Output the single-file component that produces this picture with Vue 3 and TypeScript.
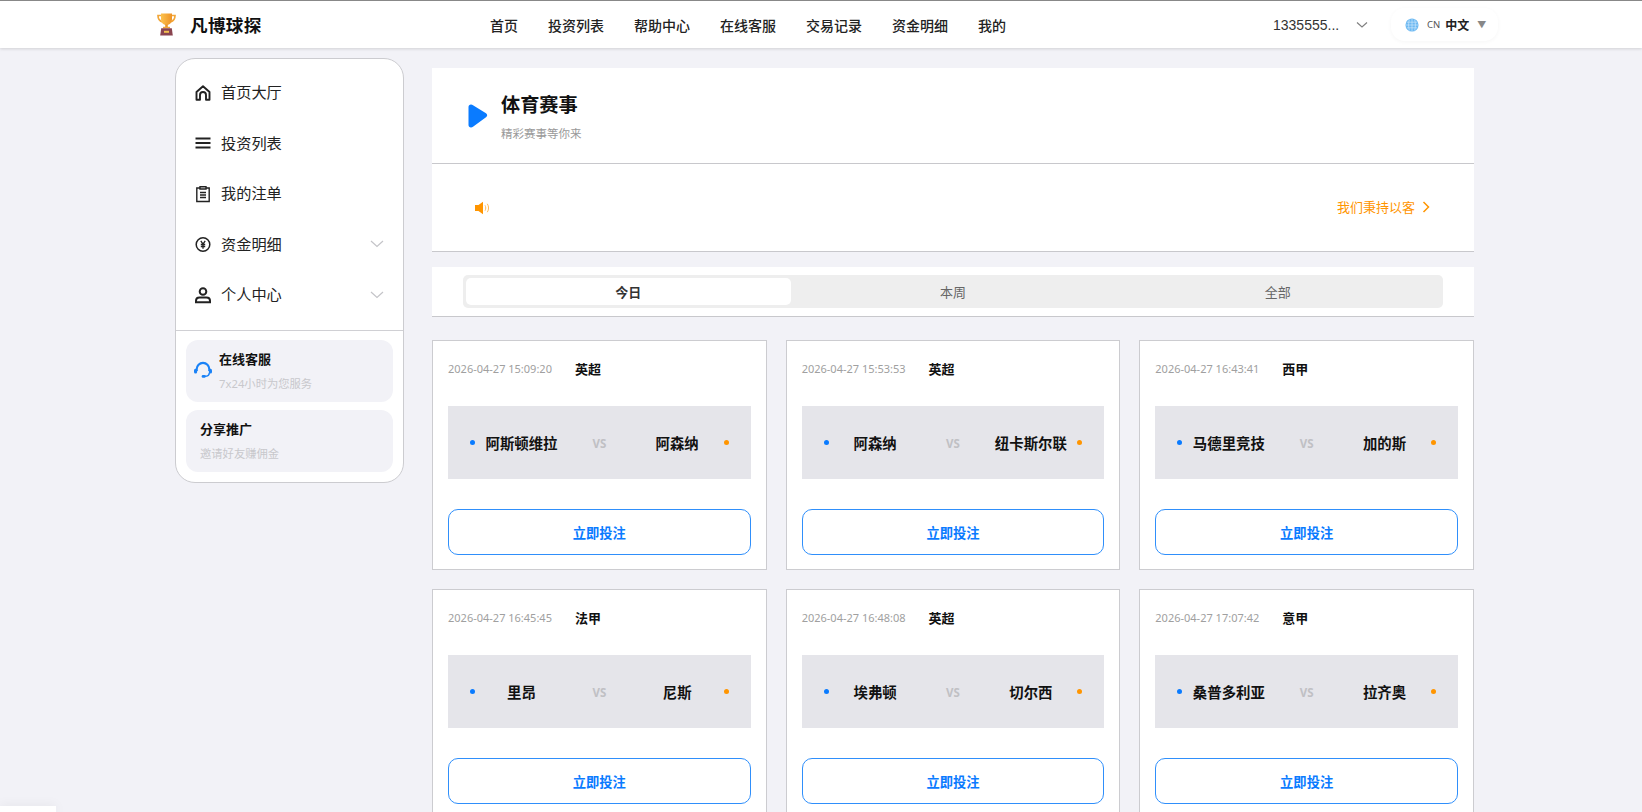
<template>
  <div class="page">
    <header class="topbar">
      <div class="topbar-inner">
        <div class="logo">
          <svg class="trophy" viewBox="0 0 19 23" width="19" height="23">
            <defs>
              <linearGradient id="cup" x1="0" y1="0" x2="1" y2="0">
                <stop offset="0" stop-color="#fcc24e" />
                <stop offset="1" stop-color="#ee9226" />
              </linearGradient>
            </defs>
            <path d="M4.5 2.5H1c0 3.5 1.5 5.5 4.500 6.5M14.5 2.5H18c0 3.5-1.5 5.5-4.5 6.5" fill="none" stroke="#f2a73a" stroke-width="1.7" />
            <path d="M4 .5h11v5c0 4-2 6.5-5.5 6.5S4 9.500 4 5.500z" fill="url(#cup)" />
            <path d="M8.2 11.5h2.600V14H8.200z" fill="#e8962b" />
            <path d="M6 13.8h7v1.500H6z" fill="#f0a63a" />
            <path d="M4.2 15.3h10.6l1 7.200H3.200z" fill="#8a4450" />
            <path d="M7 17.8h5v2H7z" fill="#f3c04f" />
          </svg>
          <span class="logo-text">凡博球探</span>
        </div>
        <nav class="nav">
          <a v-for="item in navItems" :key="item" class="nav-item">{{ item }}</a>
        </nav>
        <div class="user">
          <span class="user-name">1335555...</span>
          <svg class="user-arrow" viewBox="0 0 12 8" width="12" height="8">
            <path d="M1 1.5l5 4.500 5-4.500" fill="none" stroke="#808080" stroke-width="1.2" />
          </svg>
        </div>
        <div class="lang">
          <svg viewBox="0 0 16 16" width="14" height="14">
            <circle cx="8" cy="8" r="7.5" fill="#6db9f2" />
            <path d="M1 8h14M2 4.800h12M2 11.200h12M8 1v14M5 1.800C3.800 5.500 3.800 10.500 5 14.200M11 1.800c1.200 3.700 1.200 8.700 0 12.400" fill="none" stroke="#d4ecfc" stroke-width=".7" />
          </svg>
          <span class="lang-code">CN</span>
          <span class="lang-name">中文</span>
          <span class="lang-caret">▼</span>
        </div>
      </div>
    </header>

    <div class="layout">
      <aside class="sidebar">
        <ul class="menu">
          <li v-for="m in menuItems" :key="m.label" class="menu-item">
            <svg class="menu-icon" viewBox="0 0 18 18" width="18" height="18" v-html="m.icon"></svg>
            <span class="menu-label">{{ m.label }}</span>
            <svg v-if="m.arrow" class="menu-arrow" viewBox="0 0 14 8" width="14" height="8">
              <path d="M1 1l6 5.500L13 1" fill="none" stroke="#c4c4c8" stroke-width="1.2" />
            </svg>
          </li>
        </ul>
        <div class="side-cards">
          <div class="side-card service">
            <svg class="service-icon" viewBox="0 0 20 20" width="18" height="18">
              <path d="M3 11V9a7 7 0 0 1 14 0v2" fill="none" stroke="#1a82f7" stroke-width="2.4" />
              <rect x="0" y="8.5" width="3.5" height="5.5" rx="1.7" fill="#1a82f7" />
              <rect x="16.5" y="8.5" width="3.5" height="5.5" rx="1.7" fill="#1a82f7" />
              <path d="M17 13c0 2.500-2 4-5 4" fill="none" stroke="#1a82f7" stroke-width="1.6" />
              <rect x="8.5" y="15.5" width="4.5" height="3.2" rx="1.5" fill="#1a82f7" />
            </svg>
            <div>
              <div class="side-title">在线客服</div>
              <div class="side-sub">7x24小时为您服务</div>
            </div>
          </div>
          <div class="side-card share">
            <div>
              <div class="side-title">分享推广</div>
              <div class="side-sub">邀请好友赚佣金</div>
            </div>
          </div>
        </div>
      </aside>

      <main class="main">
        <section class="hero">
          <svg class="hero-icon" viewBox="0 0 20 26" width="20" height="26">
            <path d="M3 1.500c-1.500 0-2.500 1-2.500 2.500v18c0 1.500 1 2.500 2.500 2.500 .8 0 1.400-.3 2-.8l13-9.500c1.600-1.200 1.600-2.800 0-4L5 2.300C4.400 1.800 3.800 1.500 3 1.500z" fill="#0a7bff" />
          </svg>
          <div class="hero-text">
            <h1 class="hero-title">体育赛事</h1>
            <p class="hero-sub">精彩赛事等你来</p>
          </div>
        </section>

        <section class="notice">
          <svg class="notice-icon" viewBox="0 0 16 14" width="16" height="14">
            <path d="M0 4h3.500L8 .8v12.400L3.500 10H0z" fill="#ff9500" />
            <path d="M10 4.300c1 1.600 1 3.800 0 5.400M12.300 2.800c1.700 2.500 1.700 5.900 0 8.400" fill="none" stroke="#ffb347" stroke-width=".9" />
          </svg>
          <div class="notice-more">
            <span>我们秉持以客</span>
            <svg viewBox="0 0 8 12" width="8" height="12">
              <path d="M1.500 1l5 5-5 5" fill="none" stroke="#ff9500" stroke-width="1.5" />
            </svg>
          </div>
        </section>

        <section class="tabs-wrap">
          <div class="tabs">
            <button v-for="(t, i) in tabs" :key="t" class="tab" :class="{ active: i === activeTab }" @click="activeTab = i">{{ t }}</button>
          </div>
        </section>

        <section class="grid">
          <article v-for="g in games" :key="g.time" class="card">
            <div class="card-head">
              <span class="card-time">{{ g.time }}</span>
              <span class="card-league">{{ g.league }}</span>
            </div>
            <div class="match">
              <i class="dot home"></i>
              <span class="team">{{ g.home }}</span>
              <span class="vs">VS</span>
              <span class="team">{{ g.away }}</span>
              <i class="dot away"></i>
            </div>
            <button class="bet">立即投注</button>
          </article>
        </section>
      </main>
    </div>

    <div class="corner"></div>
  </div>
</template>

<script setup lang="ts">
import { ref } from 'vue';

const navItems = ['首页', '投资列表', '帮助中心', '在线客服', '交易记录', '资金明细', '我的'];
const tabs = ['今日', '本周', '全部'];
const activeTab = ref(0);

const menuItems = [
  {
    label: '首页大厅',
    arrow: false,
    icon: '<path d="M2.500 8L9 2.200 15.500 8v7.800h-3.500V11a3 3 0 0 0-6 0v4.800H2.500z" fill="none" stroke="#222" stroke-width="1.9" stroke-linejoin="round"/>'
  },
  {
    label: '投资列表',
    arrow: false,
    icon: '<path d="M1.500 4.500h15M1.500 9h15M1.500 13.500h15" fill="none" stroke="#222" stroke-width="1.9"/>'
  },
  {
    label: '我的注单',
    arrow: false,
    icon: '<path d="M6 3H2.800v13.500h12.400V3H12M6 1.800h6v2.200H6zM6 7.500h6M6 10h6M6 12.500h6" fill="none" stroke="#222" stroke-width="1.4"/>'
  },
  {
    label: '资金明细',
    arrow: true,
    icon: '<circle cx="9" cy="9.500" r="6.800" fill="none" stroke="#222" stroke-width="1.5"/><path d="M6.800 5.800L9 9l2.200-3.200M9 9v4.800M6.800 9.500h4.400M6.800 11.500h4.400" fill="none" stroke="#222" stroke-width="1.3"/>'
  },
  {
    label: '个人中心',
    arrow: true,
    icon: '<circle cx="9" cy="5.500" r="3.300" fill="none" stroke="#222" stroke-width="2"/><path d="M2 16.200v-1.400c0-2 1.500-3.300 3.500-3.300h7c2 0 3.500 1.300 3.500 3.300v1.400z" fill="none" stroke="#222" stroke-width="2"/>'
  }
];

const games = [
  { time: '2026-04-27 15:09:20', league: '英超', home: '阿斯顿维拉', away: '阿森纳' },
  { time: '2026-04-27 15:53:53', league: '英超', home: '阿森纳', away: '纽卡斯尔联' },
  { time: '2026-04-27 16:43:41', league: '西甲', home: '马德里竞技', away: '加的斯' },
  { time: '2026-04-27 16:45:45', league: '法甲', home: '里昂', away: '尼斯' },
  { time: '2026-04-27 16:48:08', league: '英超', home: '埃弗顿', away: '切尔西' },
  { time: '2026-04-27 17:07:42', league: '意甲', home: '桑普多利亚', away: '拉齐奥' }
];
</script>

<style>
html,
body {
  height: 100%;
  overflow: hidden;
  background: #f2f2f7;
}
</style>

<style scoped>
.page {
  height: 812px;
  overflow: hidden;
  background: #f2f2f7;
  font-family: "Noto Sans", "Noto Sans CJK SC", sans-serif;
  color: #000;
}

.topbar {
  height: 48px;
  background: #fff;
  border-top: 1px solid #888;
  box-sizing: border-box;
  box-shadow: 0 1px 3px rgba(0, 0, 0, 0.14);
}

.topbar-inner {
  display: flex;
  align-items: center;
  height: 47px;
  padding-left: 157px;
}

.logo {
  display: flex;
  align-items: center;
  gap: 14px;
  width: 333px;
}

.trophy {
  flex: none;
}

.logo-text {
  font-size: 17.6px;
  font-weight: 700;
  letter-spacing: 0.3px;
  color: #111;
}

.nav {
  display: flex;
  gap: 30px;
  width: 783px;
}

.nav-item {
  font-size: 14px;
  font-weight: 500;
  color: #222;
}

.user {
  display: flex;
  align-items: center;
  gap: 17px;
  width: 106px;
}

.user-name {
  font-family: "Liberation Sans", sans-serif;
  font-size: 14px;
  color: #333;
}

.lang {
  display: flex;
  align-items: center;
  gap: 5px;
  height: 33px;
  padding: 0 12px 0 14px;
  margin-left: 12px;
  border-radius: 14px;
  box-shadow: 0 1px 4px rgba(0, 0, 0, 0.04);
}

.lang-code {
  font-size: 9.5px;
  margin-left: 3px;
  color: #555;
}

.lang-name {
  font-size: 12px;
  font-weight: 700;
  color: #222;
}

.lang-caret {
  font-size: 9px;
  margin-left: 3px;
  color: #888;
}

.layout {
  display: flex;
  align-items: flex-start;
  padding: 10px 168px 0 175px;
  gap: 28px;
}

.sidebar {
  flex: none;
  width: 229px;
  box-sizing: border-box;
  background: #fff;
  border: 1px solid #ccccd0;
  border-radius: 20px;
}

.menu {
  list-style: none;
  margin: 0;
  padding: 7px 0 11px;
  border-bottom: 1px solid #d0d0d4;
}

.menu-item {
  display: flex;
  align-items: center;
  height: 50.5px;
  padding: 0 19px 0 18px;
  box-sizing: border-box;
}

.menu-icon {
  flex: none;
  margin: 3px 9px 0 0;
}

.menu-arrow {
  margin-top: 3px;
}

.menu-label {
  flex: 1;
  font-size: 15.2px;
  color: #222;
}

.side-cards {
  display: flex;
  flex-direction: column;
  gap: 8px;
  padding: 9px 10px 10px;
}

.side-card {
  display: flex;
  align-items: center;
  height: 62px;
  padding-bottom: 2px;
  box-sizing: border-box;
  border-radius: 12px;
  background: #f2f2f7;
}

.service {
  padding-left: 8px;
  gap: 7px;
}

.share {
  padding-left: 14px;
}

.side-title {
  font-size: 13px;
  font-weight: 700;
  color: #111;
  margin-bottom: 7px;
}

.side-sub {
  font-size: 11.3px;
  color: #c8c8cc;
}

.main {
  flex: 1;
  margin-top: 10px;
  min-width: 0;
}

.hero {
  display: flex;
  align-items: center;
  gap: 13px;
  height: 95px;
  padding-left: 36px;
  background: #fff;
  border-bottom: 1px solid #c8c8cc;
}

.hero-icon {
  flex: none;
}

.hero-text {
  margin-top: 2px;
}

.hero-title {
  margin: 0 0 7px;
  font-size: 19.2px;
  font-weight: 700;
  line-height: 26px;
  color: #111;
}

.hero-sub {
  margin: 0;
  font-size: 11.5px;
  color: #999;
}

.notice {
  display: flex;
  align-items: center;
  justify-content: space-between;
  height: 88px;
  padding: 0 44px 2px 43px;
  box-sizing: border-box;
  background: #fff;
  border-bottom: 1px solid #c8c8cc;
}

.notice-icon {
  margin-top: 2px;
}

.notice-more {
  display: flex;
  align-items: center;
  gap: 7px;
  font-size: 13px;
  color: #ff9500;
}

.tabs-wrap {
  margin-top: 15px;
  padding: 8px 31px;
  background: #fff;
  border-bottom: 1px solid #c8c8cc;
}

.tabs {
  display: flex;
  height: 33px;
  padding: 3px;
  box-sizing: border-box;
  border-radius: 5px;
  background: #eeeeee;
}

.tab {
  flex: 1;
  border: 0;
  padding: 0;
  border-radius: 5px;
  background: transparent;
  font: inherit;
  font-size: 13px;
  color: #666;
}

.tab.active {
  background: #fff;
  font-weight: 700;
  color: #333;
}

.grid {
  display: grid;
  grid-template-columns: repeat(3, 1fr);
  gap: 19px;
  margin-top: 23px;
}

.card {
  height: 230px;
  box-sizing: border-box;
  padding: 0 15px;
  background: #fff;
  border: 1px solid #ccccd0;
}

.card-head {
  display: flex;
  align-items: center;
  gap: 23px;
  height: 65px;
  padding-bottom: 10px;
  box-sizing: border-box;
}

.card-time {
  font-size: 11px;
  color: #a0a0a0;
}

.card-league {
  font-size: 13px;
  font-weight: 700;
  color: #111;
}

.match {
  display: grid;
  grid-template-columns: 8px 87px 1fr 87px 8px;
  align-items: center;
  height: 73px;
  padding: 0 22px;
  box-sizing: border-box;
  background: #e5e5ea;
}

.dot {
  width: 5px;
  height: 5px;
  border-radius: 50%;
}

.dot.home {
  background: #0a7bff;
}

.dot.away {
  justify-self: end;
  background: #ff9500;
}

.team {
  text-align: center;
  font-size: 14.4px;
  font-weight: 700;
  color: #111;
}

.vs {
  padding-top: 2px;
  text-align: center;
  font-size: 11.5px;
  font-weight: 700;
  color: #c0c0c4;
}

.bet {
  display: block;
  width: 100%;
  height: 46px;
  margin-top: 30px;
  border: 1px solid #2f8ffb;
  border-radius: 10px;
  background: #fff;
  font: inherit;
  font-size: 13.3px;
  font-weight: 700;
  color: #0a7bff;
}

.corner {
  position: fixed;
  left: 0;
  bottom: 0;
  width: 56px;
  height: 6px;
  background: #fff;
  box-shadow: 0 0 12px rgba(0, 0, 0, 0.08);
}
</style>
